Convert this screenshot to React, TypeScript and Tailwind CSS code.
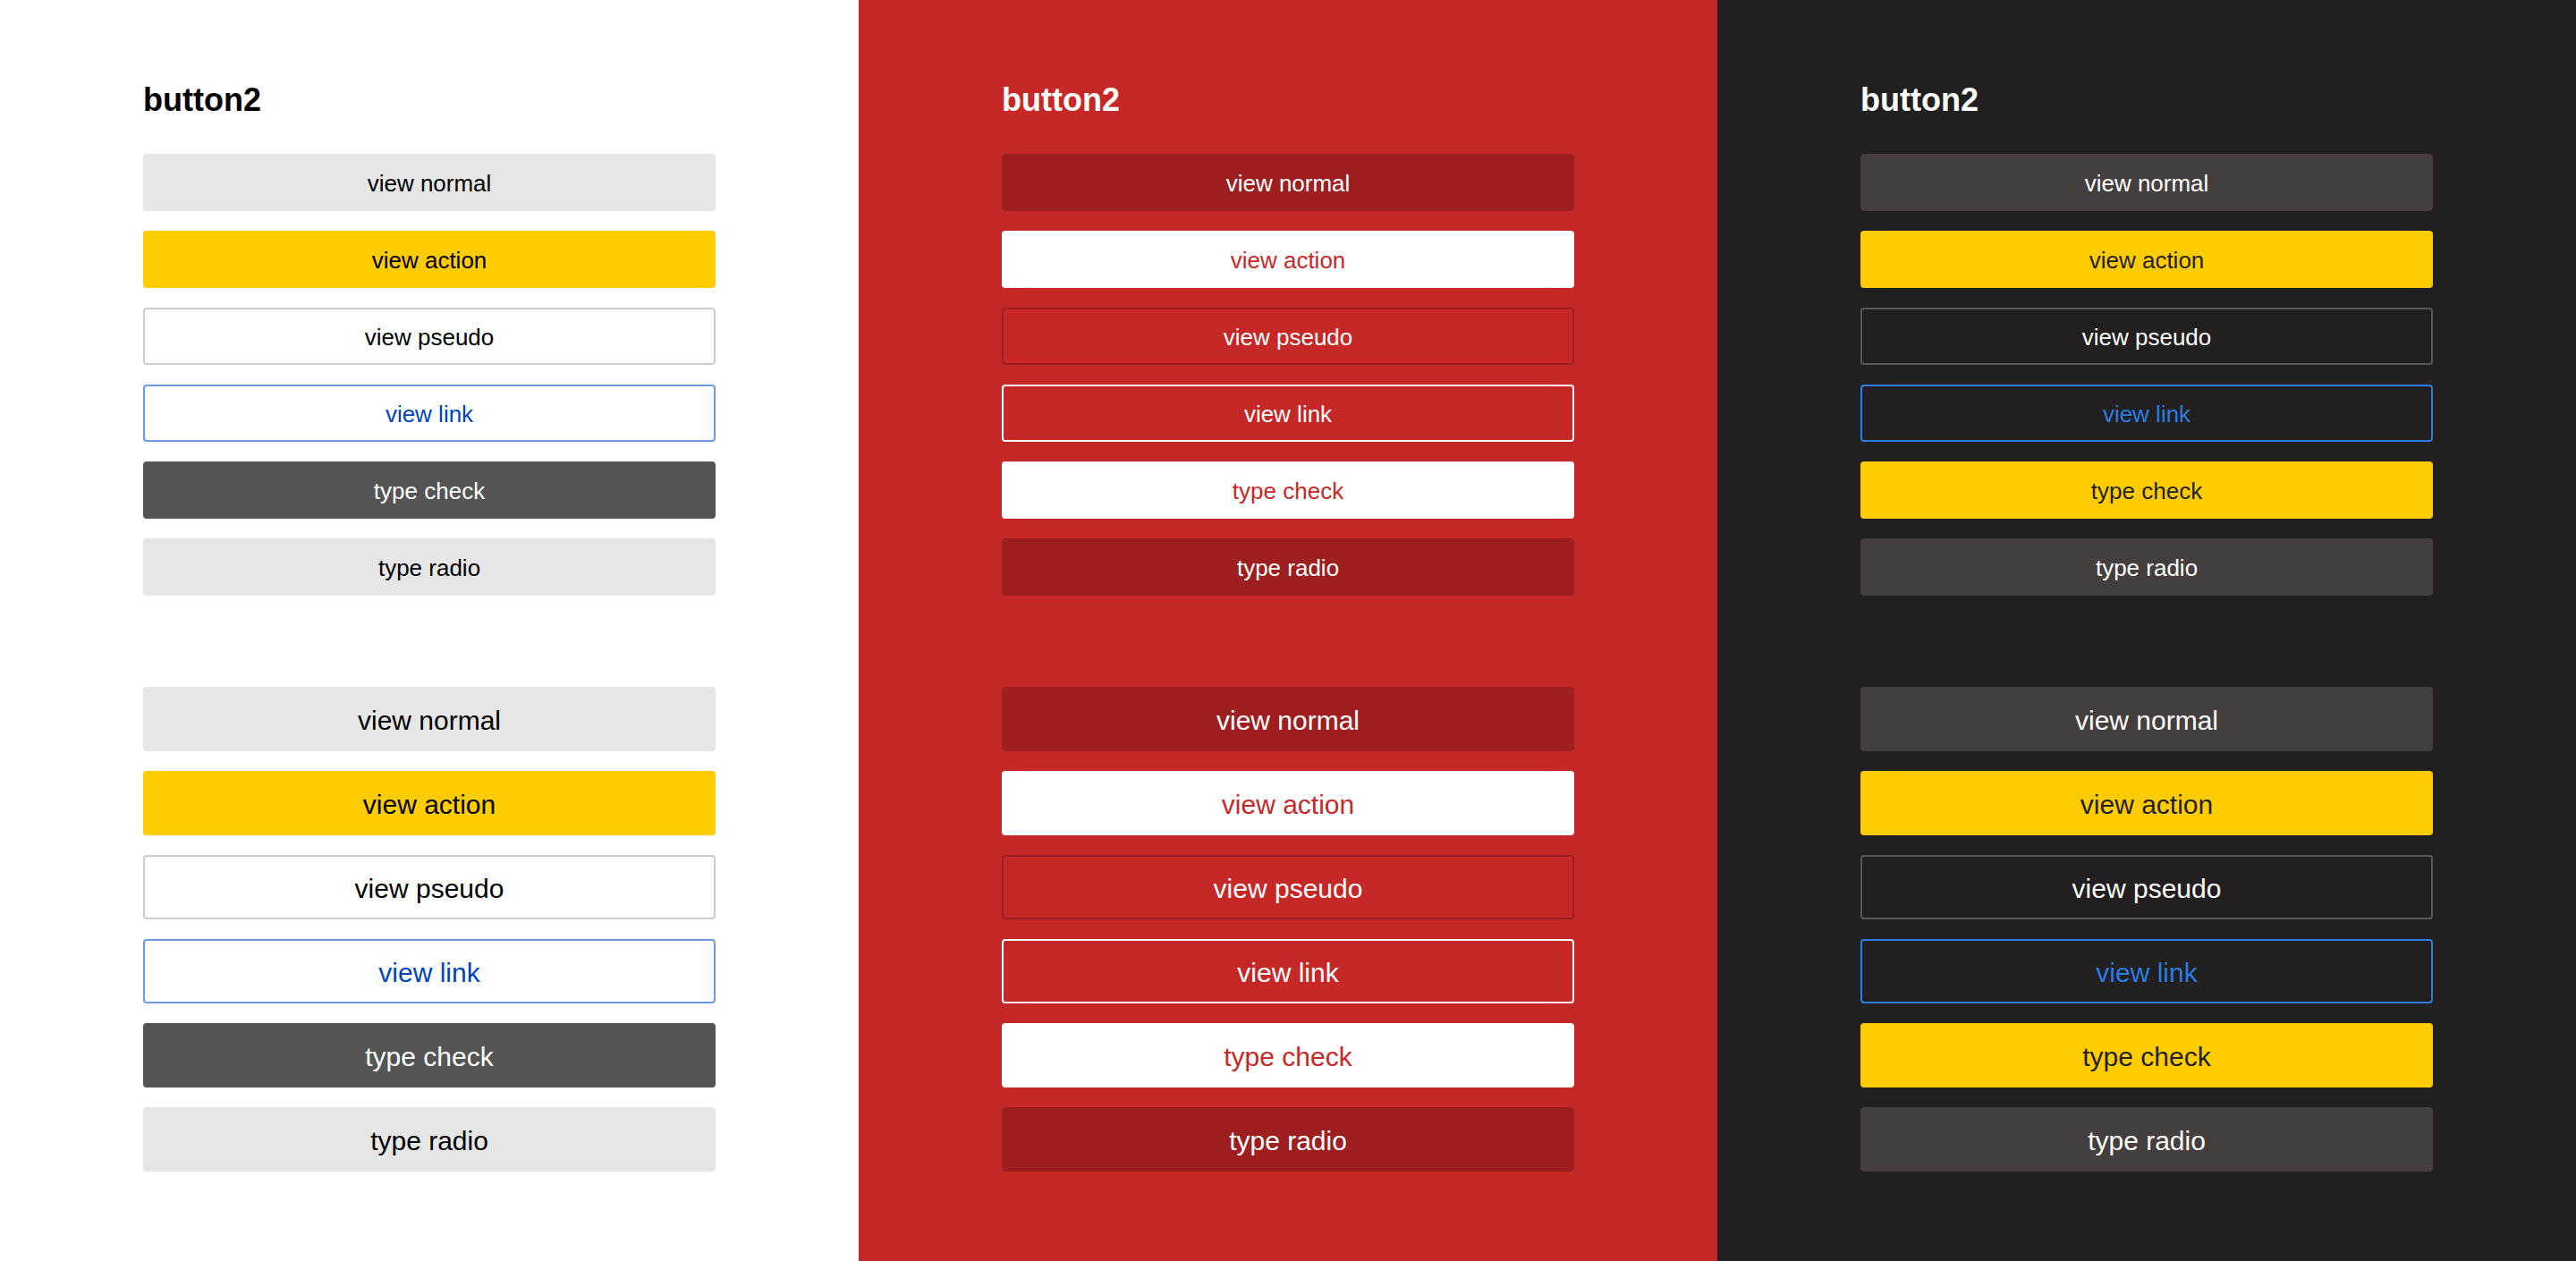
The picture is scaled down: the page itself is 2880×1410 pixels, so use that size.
import React from "react";

type Btn = { label: string; cls: string };

const light: Btn[] = [
  { label: "view normal", cls: "bg-[#e6e6e6] text-black" },
  { label: "view action", cls: "bg-[#ffcc00] text-black" },
  { label: "view pseudo", cls: "bg-white border-2 border-[#cccccc] text-black" },
  { label: "view link", cls: "bg-white border-2 border-[#6b9ae0] text-[#0044bb]" },
  { label: "type check", cls: "bg-[#555555] text-white" },
  { label: "type radio", cls: "bg-[#e6e6e6] text-black" },
];

const red: Btn[] = [
  { label: "view normal", cls: "bg-[#9e1f20] text-white" },
  { label: "view action", cls: "bg-white text-[#c62828]" },
  { label: "view pseudo", cls: "border-2 border-[#9e1f20] text-white" },
  { label: "view link", cls: "border-2 border-white text-white" },
  { label: "type check", cls: "bg-white text-[#c62828]" },
  { label: "type radio", cls: "bg-[#9e1f20] text-white" },
];

const dark: Btn[] = [
  { label: "view normal", cls: "bg-[#443f3e] text-white" },
  { label: "view action", cls: "bg-[#ffcc00] text-[#1f1f1f]" },
  { label: "view pseudo", cls: "border-2 border-[#5a5757] text-white" },
  { label: "view link", cls: "border-2 border-[#2a7de1] text-[#2a7de1]" },
  { label: "type check", cls: "bg-[#ffcc00] text-[#1f1f1f]" },
  { label: "type radio", cls: "bg-[#443f3e] text-white" },
];

function Panel({ bg, title, items }: { bg: string; title: string; items: Btn[] }) {
  return (
    <div className={`w-[960px] h-[1410px] pl-[160px] pt-[92px] ${bg}`}>
      <div className={`text-[36px] leading-[40px] font-bold ${title}`}>button2</div>
      <div className="mt-[40px] w-[640px] flex flex-col gap-[22px]">
        {items.map((b) => (
          <div
            key={"s" + b.label}
            className={`h-[64px] pt-[3px] rounded-[4px] flex items-center justify-center text-[26px] ${b.cls}`}
          >
            {b.label}
          </div>
        ))}
      </div>
      <div className="mt-[102px] w-[640px] flex flex-col gap-[22px]">
        {items.map((b) => (
          <div
            key={"l" + b.label}
            className={`h-[72px] pt-[3px] rounded-[4px] flex items-center justify-center text-[30px] ${b.cls}`}
          >
            {b.label}
          </div>
        ))}
      </div>
    </div>
  );
}

export default function App() {
  return (
    <div
      className="flex w-[2880px] h-[1410px] overflow-hidden"
      style={{ fontFamily: '"Liberation Sans", Arial, Helvetica, sans-serif' }}
    >
      <Panel bg="bg-white" title="text-black" items={light} />
      <Panel bg="bg-[#c62828]" title="text-white" items={red} />
      <Panel bg="bg-[#211f1f]" title="text-white" items={dark} />
    </div>
  );
}
